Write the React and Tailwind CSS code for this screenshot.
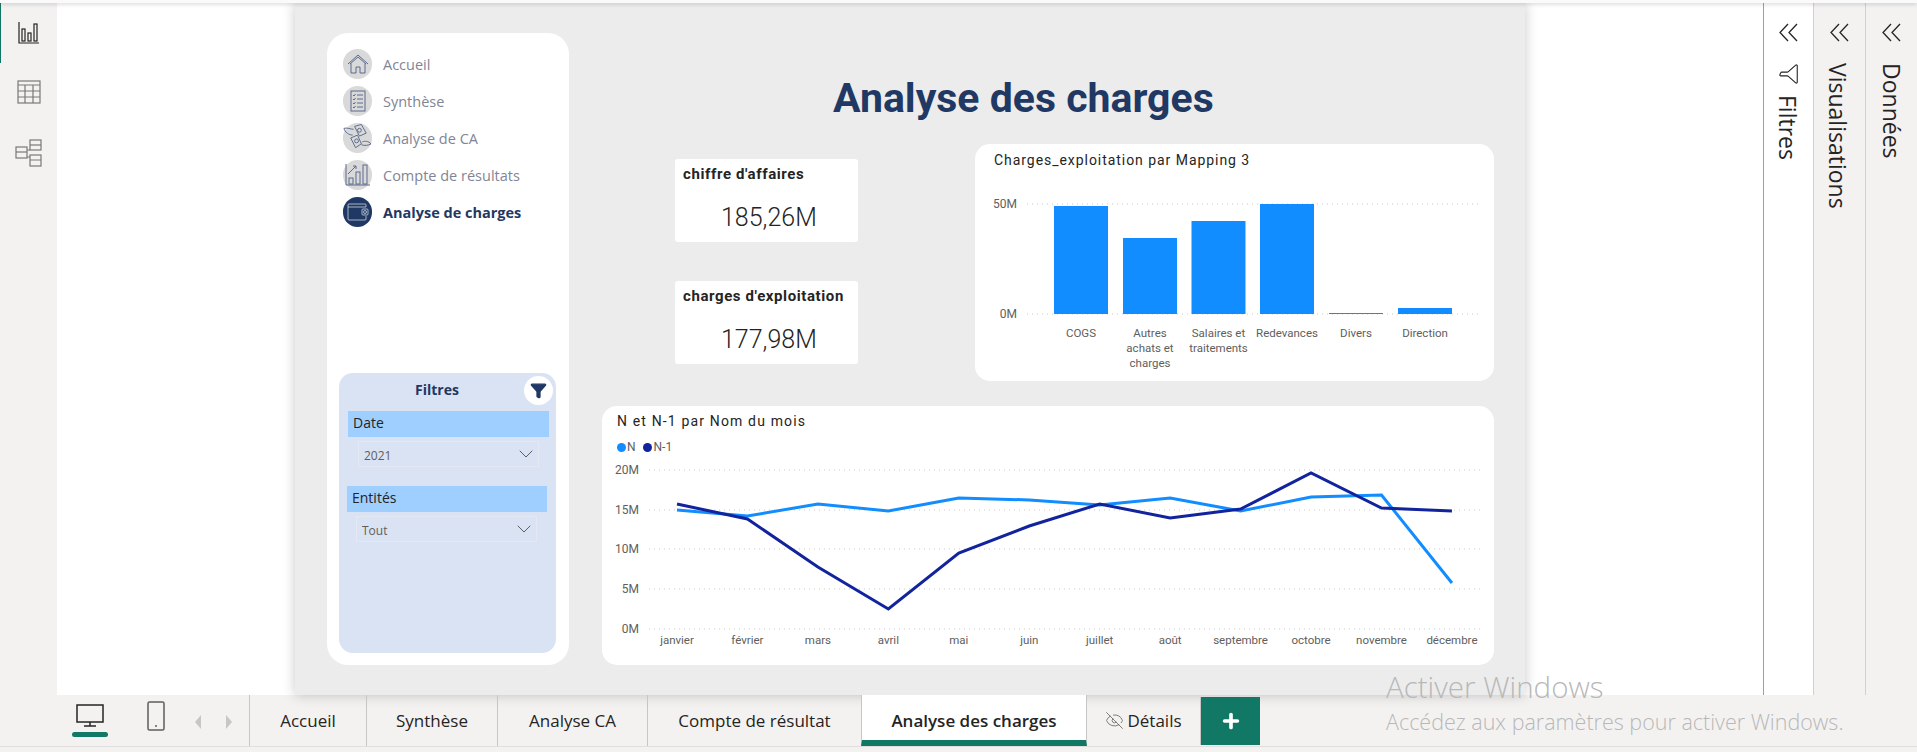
import { ChevronDown, EyeOff, Filter, Plus } from "lucide-react";

const DIN = "font-['Roboto',sans-serif]";
const SEGOE = "font-['Open_Sans',sans-serif]";

const BARS = [
  { label: ["COGS"], x: 1054, top: 206 },
  { label: ["Autres", "achats et", "charges"], x: 1123, top: 238 },
  { label: ["Salaires et", "traitements"], x: 1191.5, top: 221 },
  { label: ["Redevances"], x: 1260, top: 204 },
  { label: ["Divers"], x: 1329, top: 313 },
  { label: ["Direction"], x: 1398, top: 308 },
];

const MONTHS = ["janvier", "février", "mars", "avril", "mai", "juin", "juillet", "août", "septembre", "octobre", "novembre", "décembre"];
const N = [510, 516, 504, 511, 498, 500, 505, 498, 511, 497, 495, 583];
const N1 = [504, 519, 567, 609, 553, 526, 504, 518, 509, 473, 508, 511];
const monthX = (i) => 677 + i * 70.45;
const toPoints = (values) => values.map((y, i) => `${monthX(i)},${y}`).join(" ");

const TABS = [
  { name: "Accueil", w: "w-[117px]" },
  { name: "Synthèse", w: "w-[131px]" },
  { name: "Analyse CA", w: "w-[150px]" },
  { name: "Compte de résultat", w: "w-[214px]" },
];

function HomeIcon() {
  return (
    <svg width="22" height="22" viewBox="0 0 22 22" fill="none" stroke="#5b6b8e" strokeWidth="1">
      <path d="M1 11 11 2l10 9M3 11 11 4l8 7" />
      <path d="M4 10.5V20h5v-6h4v6h5v-9.5" />
    </svg>
  );
}

function ListIcon() {
  return (
    <svg width="18" height="22" viewBox="0 0 18 22" fill="none" stroke="#5b6b8e" strokeWidth="1">
      <rect x="2" y="1" width="14" height="20" />
      <path d="M8 5h6M8 9h6M8 13h6M8 17h6M4 5l1 1 1.500-2M4 9l1 1 1.500-2M4 13l1 1 1.500-2M4 17l1 1 1.500-2" />
    </svg>
  );
}

function MoneyIcon() {
  return (
    <svg width="30" height="30" viewBox="0 0 30 30" fill="none" stroke="#5b6b8e" strokeWidth="1">
      <path d="M12 3 19 1l5 9-7 3zM8 15l7-3 4 9-6 4z" />
      <circle cx="17" cy="7" r="2" />
      <circle cx="14" cy="18" r="2" />
      <path d="M11 6C8 6 4 4 1 5c1 4 5 7 9 7M20 19c3-1 6-1 9 2-3 2-7 2-10 1" />
    </svg>
  );
}

function ChartIcon() {
  return (
    <svg width="26" height="24" viewBox="0 0 26 24" fill="none" stroke="#5b6b8e" strokeWidth="1">
      <path d="M1 1v21h24" />
      <rect x="4" y="15" width="4" height="6" />
      <rect x="11" y="9" width="4" height="12" />
      <rect x="18" y="2" width="4" height="19" />
      <path d="M3 11 11 3M8 3h3v3" />
    </svg>
  );
}

function WalletIcon() {
  return (
    <svg width="22" height="18" viewBox="0 0 22 18" fill="none" stroke="#ffffff" strokeWidth="0.8" opacity="0.8">
      <path d="M19 4V2a1 1 0 0 0-1-1H2a1 1 0 0 0-1 1v14a1 1 0 0 0 1 1h16a1 1 0 0 0 1-1v-3" />
      <path d="M1 4h18" />
      <rect x="15" y="6" width="6" height="6" rx="1" />
      <circle cx="18" cy="9" r="1.500" />
    </svg>
  );
}

function DoubleChevron() {
  return (
    <svg width="19" height="19" viewBox="0 0 19 19" fill="none" stroke="#252423" strokeWidth="1.300" className="absolute top-[20px]">
      <path d="M9 1 1 9.500 9 18M18 1 10 9.500 18 18" />
    </svg>
  );
}

const NAV = [
  { name: "Accueil", icon: <HomeIcon /> },
  { name: "Synthèse", icon: <ListIcon /> },
  { name: "Analyse de CA", icon: <MoneyIcon /> },
  { name: "Compte de résultats", icon: <ChartIcon /> },
];

function RailIcons() {
  return (
    <div className="relative w-[57px] shrink-0 flex flex-col items-center pt-[18px] gap-[35px]">
      <div className="absolute left-0 top-0 w-[1px] h-[60px] bg-[#117865]" />
      <svg width="22" height="24" viewBox="0 0 22 24" fill="none" stroke="#252423" strokeWidth="1.200">
        <path d="M1 1v21h20" />
        <rect x="4" y="8" width="3" height="12" />
        <rect x="10" y="12" width="3" height="8" />
        <rect x="16" y="3" width="3" height="17" />
      </svg>
      <svg width="24" height="24" viewBox="0 0 24 24" fill="none" stroke="#7a7876" strokeWidth="1.200">
        <rect x="1" y="1" width="22" height="22" />
        <path d="M1 5h22M1 11h22M1 17h22M8 5v18M16 5v18" />
      </svg>
      <svg width="27" height="28" viewBox="0 0 27 28" fill="none" stroke="#7a7876" strokeWidth="1.200">
        <rect x="15" y="1" width="11" height="10" />
        <path d="M15 6h11" />
        <rect x="1" y="8" width="11" height="11" />
        <path d="M1 13h11" />
        <rect x="15" y="16" width="11" height="11" />
        <path d="M15 21h11M12 11h3M12 18h3" />
      </svg>
    </div>
  );
}

function NavCard() {
  return (
    <div className="w-[242px] h-[632px] shrink-0 bg-white rounded-[21px] flex flex-col pt-[16px]">
      <div className="flex flex-col gap-[7px] pl-[16px]">
        {NAV.map((item) => (
          <div key={item.name} className="flex items-center h-[30px] gap-[11px]">
            <div className="w-[29px] h-[30px] rounded-full bg-[#d9d9d9] flex items-center justify-center">{item.icon}</div>
            <span className={`${SEGOE} mt-[2px] text-[14.5px] text-[#7f8596]`}>{item.name}</span>
          </div>
        ))}
        <div className="flex items-center h-[30px] gap-[11px]">
          <div className="w-[29px] h-[30px] rounded-full bg-[#1f3864] flex items-center justify-center">
            <WalletIcon />
          </div>
          <span className={`${SEGOE} mt-[2px] text-[14.5px] font-bold text-[#1f3864]`}>Analyse de charges</span>
        </div>
      </div>

      <div className="relative mt-auto mb-[12px] ml-[12px] w-[217px] h-[280px] rounded-[14px] bg-[#dae3f3] flex flex-col">
        <div className={`${SEGOE} h-[32px] pr-[21px] flex items-center justify-center text-[14px] font-bold text-[#1f3864]`}>Filtres</div>
        <div className="absolute right-[3px] top-[3px] w-[29px] h-[29px] rounded-full bg-white flex items-center justify-center">
          <Filter size={17} fill="#1f3864" color="#1f3864" />
        </div>
        <div className={`${SEGOE} mt-[6px] ml-[9px] w-[201px] h-[26px] bg-[#9fcfff] pl-[5px] pb-[3px] flex items-center text-[14px] text-[#252423]`}>Date</div>
        <div className={`${SEGOE} mt-[4px] ml-[19px] w-[181px] h-[26px] border border-[#e3e8f3] pl-[5px] flex items-center justify-between text-[12px] text-[#605e5c]`}>
          <span className="mt-[4px]">2021</span>
          <ChevronDown size={24} strokeWidth={1} color="#605e5c" />
        </div>
        <div className={`${SEGOE} mt-[19px] ml-[8px] w-[200px] h-[26px] bg-[#9fcfff] pl-[5px] pb-[3px] flex items-center text-[14px] text-[#252423]`}>Entités</div>
        <div className={`${SEGOE} mt-[4px] ml-[17px] w-[181px] h-[26px] border border-[#e3e8f3] pl-[5px] flex items-center justify-between text-[12px] text-[#605e5c]`}>
          <span className="mt-[4px]">Tout</span>
          <ChevronDown size={24} strokeWidth={1} color="#605e5c" />
        </div>
      </div>
    </div>
  );
}

function Kpi({ label, value }) {
  return (
    <div className="w-[183px] h-[83px] bg-white rounded-[3px] pl-[8px] pt-[5px] flex flex-col">
      <div className={`${DIN} text-[15px] font-bold leading-[20px] tracking-[0.6px] text-[#252423]`}>{label}</div>
      <div className={`${DIN} mt-[18px] pl-[38px] text-[25px] font-light leading-[32px] text-[#252423]`}>{value}</div>
    </div>
  );
}

function BarCard() {
  return (
    <div className="ml-[117px] w-[519px] h-[237px] bg-white rounded-[15px] flex flex-col">
      <div className={`${DIN} h-[32px] pl-[19px] flex items-center text-[14px] tracking-[0.95px] text-[#252423]`}>Charges_exploitation par Mapping 3</div>
      <svg width="519" height="205" viewBox="975 176 519 205" className={DIN}>
        {[204, 314].map((y) => (
          <line key={y} x1="1027" x2="1478" y1={y} y2={y} stroke="#c8c8c8" strokeDasharray="1 4" />
        ))}
        <text x="1017" y="208" textAnchor="end" fontSize="12" fill="#605e5c">50M</text>
        <text x="1017" y="318" textAnchor="end" fontSize="12" fill="#605e5c">0M</text>
        {BARS.map((b) => (
          <g key={b.x}>
            <rect x={b.x} y={b.top} width="54" height={314 - b.top} fill="#118dff" />
            {b.label.map((line, i) => (
              <text key={line} x={b.x + 27} y={337 + i * 15} textAnchor="middle" fontSize="11.500" fill="#605e5c">{line}</text>
            ))}
          </g>
        ))}
      </svg>
    </div>
  );
}

function LineCard() {
  return (
    <div className="mt-[25px] -ml-[1px] w-[892px] h-[259px] bg-white rounded-[15px] flex flex-col">
      <div className={`${DIN} h-[26px] pl-[15px] flex items-end text-[14px] tracking-[1.15px] text-[#252423]`}>N et N-1 par Nom du mois</div>
      <div className={`${DIN} h-[30px] pl-[15px] flex items-center text-[12px] text-[#605e5c]`}>
        <span className="w-[9px] h-[9px] rounded-full bg-[#118dff] mr-[1px]" />N
        <span className="w-[9px] h-[9px] rounded-full bg-[#12239e] ml-[7px] mr-[2px]" />N-1
      </div>
      <svg width="892" height="203" viewBox="602 462 892 203" className={DIN}>
        {[["20M", 470], ["15M", 510], ["10M", 549], ["5M", 589], ["0M", 629]].map(([label, y]) => (
          <g key={label}>
            <line x1="649" x2="1480" y1={y} y2={y} stroke="#c8c8c8" strokeDasharray="1 4" />
            <text x="639" y={y + 4} textAnchor="end" fontSize="12" fill="#605e5c">{label}</text>
          </g>
        ))}
        <polyline points={toPoints(N)} fill="none" stroke="#118dff" strokeWidth="3" />
        <polyline points={toPoints(N1)} fill="none" stroke="#12239e" strokeWidth="3" />
        {MONTHS.map((m, i) => (
          <text key={m} x={monthX(i)} y="644" textAnchor="middle" fontSize="11.500" fill="#605e5c">{m}</text>
        ))}
      </svg>
    </div>
  );
}

export default function App() {
  return (
    <div className="relative w-[1917px] h-[752px] overflow-hidden bg-[#f3f2f1] flex flex-col">
      <div className="relative z-10 h-[3px] bg-[#fafafa] shadow-[0_1px_4px_rgba(0,0,0,0.2)]" />

      <div className="h-[692px] flex">
        <RailIcons />

        {/* zone du rapport */}
        <div className="w-[1707px] bg-white pl-[238px] border-r border-[#a19f9d]">
          <div className="w-[1230px] h-full bg-[#ececec] shadow-[0_0_12px_rgba(0,0,0,0.22)] pl-[32px] pt-[30px] flex overflow-hidden">
            <NavCard />
            <div className="ml-[34px] flex flex-col">
              <div className="h-[111px] pl-[230px] pt-[40px]">
                <h1 className={`${DIN} text-[41px] leading-[50px] font-bold text-[#1f3864]`}>Analyse des charges</h1>
              </div>
              <div className="flex h-[237px]">
                <div className="ml-[72px] pt-[15px] flex flex-col gap-[39px]">
                  <Kpi label="chiffre d'affaires" value="185,26M" />
                  <Kpi label="charges d'exploitation" value="177,98M" />
                </div>
                <BarCard />
              </div>
              <LineCard />
            </div>
          </div>
        </div>

        <div className="relative w-[49px] bg-white flex flex-col items-center pt-[60px]">
          <DoubleChevron />
          <Filter size={22} strokeWidth={1.2} color="#252423" className="rotate-90 mb-[10px]" />
          <span className={`${SEGOE} -ml-[1px] [writing-mode:vertical-rl] text-[23px] leading-[28px] text-[#252423]`}>Filtres</span>
        </div>
        <div className="relative w-[52px] bg-[#f3f2f1] border-l border-[#d2d0ce] flex flex-col items-center pt-[60px]">
          <DoubleChevron />
          <span className={`${SEGOE} [writing-mode:vertical-rl] text-[23px] leading-[28px] text-[#252423] -ml-[3px]`}>Visualisations</span>
        </div>
        <div className="relative w-[52px] bg-[#f3f2f1] border-l border-[#d2d0ce] flex flex-col items-center pt-[60px]">
          <DoubleChevron />
          <span className={`${SEGOE} [writing-mode:vertical-rl] text-[23px] leading-[28px] text-[#252423]`}>Données</span>
        </div>
      </div>

      {/* onglets */}
      <div className={`${SEGOE} h-[52px] flex border-b border-[#e1dfdd] text-[17px] text-[#252423]`}>
        <div className="w-[249px] flex items-start pl-[72px] pt-[6px]">
          <div className="flex flex-col items-center w-[36px]">
            <svg width="28" height="28" viewBox="0 0 28 28" fill="none" stroke="#252423" strokeWidth="1.500">
              <rect x="1" y="4" width="26" height="17" />
              <path d="M14 21v4M8 25h12" />
            </svg>
            <div className="mt-[3px] w-[36px] h-[5px] rounded-full bg-[#117865]" />
          </div>
          <svg width="18" height="30" viewBox="0 0 18 30" fill="none" stroke="#605e5c" strokeWidth="1.500" className="ml-[39px]">
            <rect x="1" y="1" width="16" height="28" rx="1.500" />
            <path d="M8 25h2" />
          </svg>
          <div className="flex items-center gap-[25px] pt-[14px] ml-[30px]">
            <span className="w-0 h-0 border-y-[7px] border-y-transparent border-r-[6px] border-r-[#c8c6c4]" />
            <span className="w-0 h-0 border-y-[7px] border-y-transparent border-l-[6px] border-l-[#c8c6c4]" />
          </div>
        </div>
        {TABS.map((t) => (
          <div key={t.name} className={`${t.w} border-l border-[#c8c6c4] flex items-center justify-center`}>{t.name}</div>
        ))}
        <div className="w-[226px] border-x border-[#c8c6c4] bg-white border-b-[6px] border-b-[#117865] pt-[6px] flex items-center justify-center font-semibold">Analyse des charges</div>
        <div className="w-[113px] flex items-center justify-center gap-[3px]">
          <EyeOff size={19} strokeWidth={1} color="#605e5c" />
          Détails
        </div>
        <div className="w-[60px] h-[48px] mt-[2px] bg-[#117865] flex items-center justify-center border-l border-[#c8c6c4]">
          <Plus size={22} strokeWidth={4} color="#ffffff" />
        </div>
      </div>

      {/* filigrane */}
      <div className={`${SEGOE} absolute left-[1386px] top-[667px] font-light text-[#b8b8b8]`}>
        <div className="text-[29.500px] leading-[40px]">Activer Windows</div>
        <div className="text-[21.500px] leading-[28px] mt-[1px]">Accédez aux paramètres pour activer Windows.</div>
      </div>
    </div>
  );
}
